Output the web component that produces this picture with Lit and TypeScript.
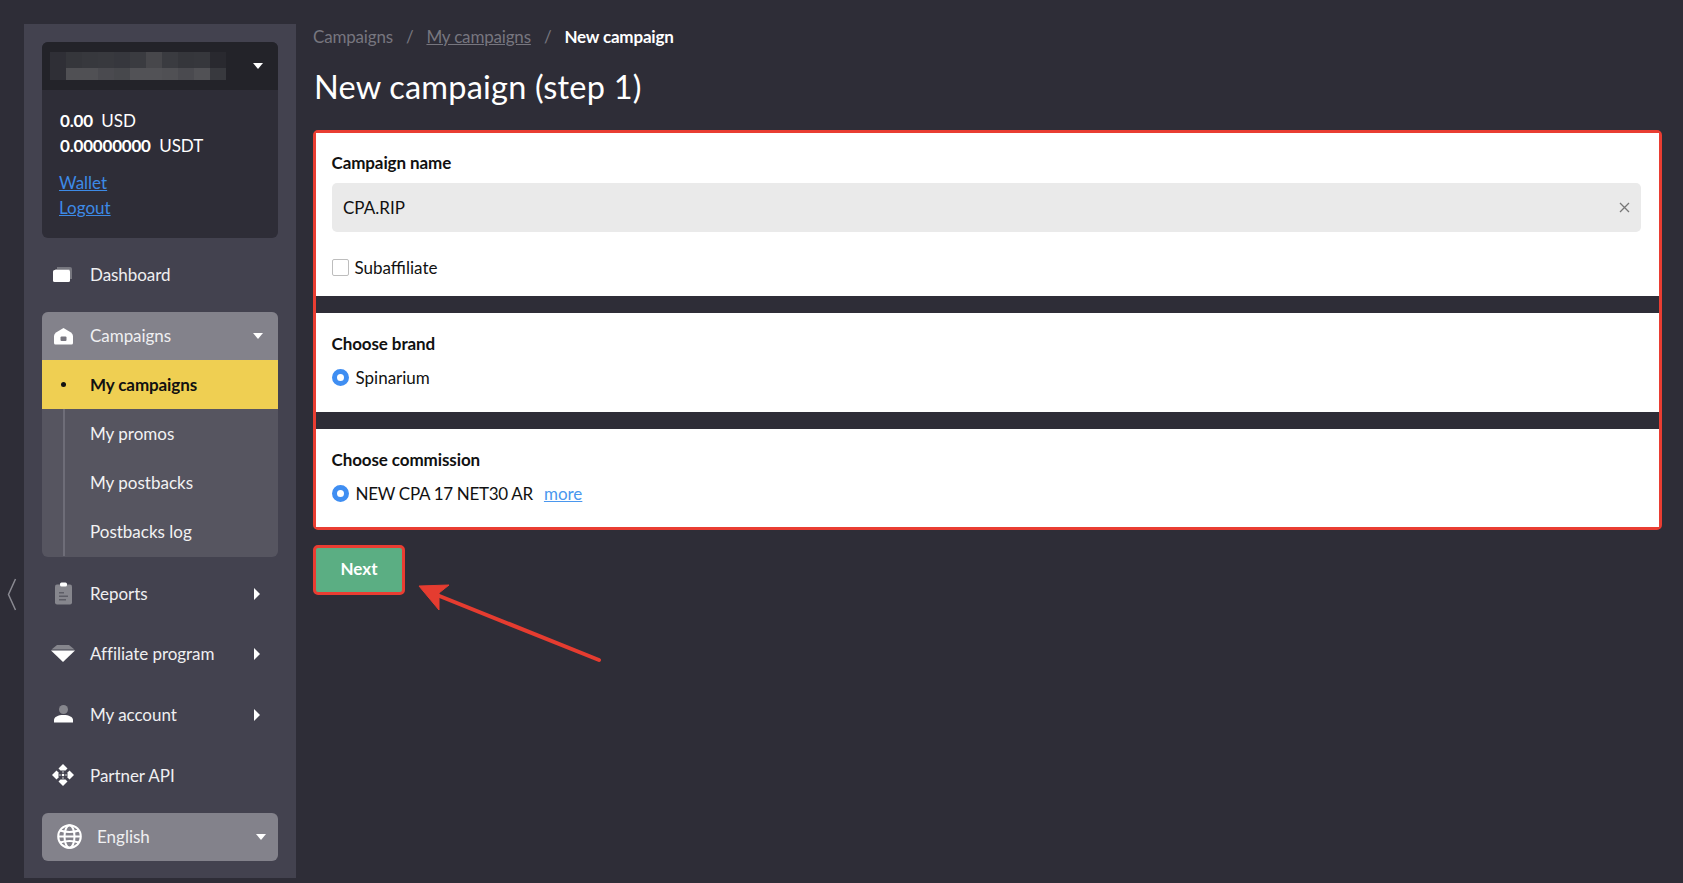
import { LitElement, html, css, svg } from "lit";
import { customElement } from "lit/decorators.js";

const row1 = ["#2f2f36","#35363b","#37383d","#38393e","#36373d","#3a3b40","#47474b","#3a3b40","#35363b","#36373c","#29292f"];
const row2 = ["#2f2f36","#505054","#505054","#4a4a4f","#47484c","#525256","#525256","#505054","#4a4a4f","#515155","#38393e"];

const icons = {
  dash: svg`<path d="M4 1h13a2 2 0 0 1 2 2v10h-2V3H4z" fill="#77777f"/><rect x="2" y="3" width="15" height="12" rx="1" fill="#9b9ba1"/><rect x="0" y="4" width="17" height="12" rx="1.5" fill="#fff"/>`,
  home: svg`<path d="M9.500 0 L17 4.500 Q19 6 19 8 V15 Q19 16.500 17.500 16.500 H1.500 Q0 16.500 0 15 V8 Q0 6 2 4.500 Z" fill="#fff"/><rect x="6.500" y="8.500" width="6" height="4.500" rx="1" fill="#77767f"/>`,
  report: svg`<rect x="1" y="2.500" width="17" height="20" rx="2" fill="#86868d"/><rect x="6" y="0.500" width="7" height="4" rx="1.500" fill="#fff"/><rect x="5" y="10" width="5" height="1.500" fill="#5d5d66"/><rect x="5" y="13.500" width="9" height="1.500" fill="#5d5d66"/><rect x="5" y="17" width="7" height="1.500" fill="#5d5d66"/>`,
  gem: svg`<path d="M6 0H18L23.500 4.500H.5Z" fill="#86868d"/><path d="M0 5.500H24L12 17Z" fill="#fff"/>`,
  user: svg`<circle cx="9.500" cy="4.500" r="4.500" fill="#86868d"/><path d="M0 17.500V15C0 12 4 10 9.500 10S19 12 19 15v2.500z" fill="#fff"/>`,
  api: svg`<g fill="#fff"><path d="M11 0l4.500 4.500-2 2h-5l-2-2z"/><path d="M11 22l4.500-4.500-2-2h-5l-2 2z"/><path d="M0 11l4.500-4.500 2 2v5l-2 2z"/><path d="M22 11l-4.500-4.500-2 2v5l2 2z"/><circle cx="11" cy="11" r="1.300"/><circle cx="11" cy="8" r=".7"/><circle cx="11" cy="14" r=".7"/><circle cx="8" cy="11" r=".7"/><circle cx="14" cy="11" r=".7"/></g>`,
};

const ico = (name: keyof typeof icons, w: number, h: number) =>
  html`<svg class="ico" width=${w} height=${h} viewBox="0 0 ${w} ${h}">${icons[name]}</svg>`;

@customElement("app-root")
export class AppRoot extends LitElement {
  static styles = css`
    :host { display: block; width: 1683px; height: 883px; background: #2e2d37; position: relative; overflow: hidden;
      font-family: "Lato", "Noto Sans", sans-serif; font-size: 17px; color: #fff; }
    .layout { display: flex; align-items: flex-start; height: 883px; padding: 24px 21px 5px 0; box-sizing: border-box; }
    .toggle { width: 24px; flex: none; align-self: flex-start; display: flex; padding: 554px 0 0 7px; box-sizing: border-box; }
    .side { width: 272px; flex: none; height: 854px; background: #43424f; padding: 18px 18px 0 18px; box-sizing: border-box; }
    .card { background: #2e2d37; border-radius: 6px; height: 196px; overflow: hidden; }
    .card-head { height: 48px; background: #232329; display: flex; align-items: center; justify-content: space-between; padding: 0 15px 0 8px; }
    .pix { display: grid; grid-template-columns: repeat(11, 16px); grid-template-rows: 16px 12px; }
    .tri-d { width: 0; height: 0; border-left: 5.500px solid transparent; border-right: 5.500px solid transparent; border-top: 6px solid #fff; }
    .tri-r { width: 0; height: 0; border-top: 6px solid transparent; border-bottom: 6px solid transparent; border-left: 6px solid #fff; }
    .bal { padding: 18px 0 0 18px; line-height: 25px; font-size: 17px; }
    .bal b { font-weight: 700; margin-right: 4px; letter-spacing: -.2px; }
    .links { padding: 12px 0 0 17px; line-height: 25px; display: flex; flex-direction: column; align-items: flex-start; }
    a { color: #3d8ae6; text-decoration: underline; }
    .item { display: flex; align-items: center; height: 48px; padding-left: 9px; position: relative; color: #efeff1; }
    .item .slot { width: 24px; display: flex; justify-content: center; flex: none; }
    .item .label { margin-left: 15px; flex: 1; letter-spacing: -.05px; }
    .item .tri-r { margin-right: 18px; margin-top: 1px; }
    .dashboard { margin: 12px 0 14px; }
    .group { background: #565560; border-radius: 6px; overflow: hidden; height: 245px; }
    .group-head { background: #83828b; padding-right: 15px; }
    .group-head .label { padding-bottom: 2px; }
    .subwrap { display: flex; flex-direction: column; }
    .subitem { height: 49px; display: flex; align-items: center; padding: 0 0 0 48px; box-sizing: border-box; position: relative; color: #f2f2f3; }
    .subitem::before { content: ""; position: absolute; left: 21px; top: 0; bottom: 0; width: 2px; background: #6e6d78; }
    .subitem.on { background: #efcf52; color: #111; font-weight: 700; letter-spacing: -.1px; }
    .subitem.on::before { left: 19px; top: 22px; bottom: auto; width: 5px; height: 5px; border-radius: 50%; background: #111; }
    .rows { padding-top: 12px; display: flex; flex-direction: column; gap: 12.500px; }
    .rows .item:last-child { padding-top: 1px; box-sizing: border-box; }
    .lang { margin-top: 14px; height: 48px; background: #83828b; border-radius: 6px; display: flex; align-items: center; padding: 0 12px 0 15px; }
    .lang span { flex: 1; margin-left: 15px; color: #efeff1; }
    main { flex: 1; padding-left: 17px; min-width: 0; }
    .crumbs { display: flex; align-items: center; height: 24px; color: #77767f; gap: 13px; letter-spacing: -.18px; }
    .crumbs a { color: #77767f; }
    .crumbs b { color: #fff; font-weight: 700; }
    h1 { margin: 13px 0 0 1px; font-size: 32.500px; font-weight: 400; line-height: 52px; letter-spacing: .2px; }
    .form { margin-top: 17px; border: 3px solid #e93d32; border-radius: 5px; display: flex; flex-direction: column; gap: 17px; height: 400px; box-sizing: border-box; }
    .sect { background: #fff; color: #111; padding: 0 18px 0 15.500px; box-sizing: border-box; }
    .s1 { height: 163px; padding-top: 19px; }
    .s2 { height: 99px; padding-top: 20px; }
    .s3 { height: 98px; padding-top: 20px; }
    .t { font-weight: 700; line-height: 22px; letter-spacing: -.1px; }
    .input { height: 49px; margin-top: 9px; background: #eaeaea; border-radius: 5px; display: flex; align-items: center; justify-content: space-between; padding: 0 11px 0 11.500px; }
    .opt { display: flex; align-items: center; height: 24px; margin-top: 10px; }
    .s1 .opt { margin-top: 23px; }
    .box { width: 17px; height: 17px; box-sizing: border-box; border: 1px solid #bdbdbd; border-radius: 2px; margin-right: 6px; }
    .radio { width: 17px; height: 17px; border-radius: 50%; border: 5px solid #3f8ef2; box-sizing: border-box; margin-right: 7px; background: #fff; }
    .tight { letter-spacing: -.3px; }
    .opt a { color: #4a97ee; margin-left: 11px; }
    .next { display: flex; align-items: center; justify-content: center; margin-top: 15px; width: 92px; height: 50px; padding-bottom: 3px; background: #5bae83; border: 3px solid #e93d32; border-radius: 5px; box-sizing: border-box; font-weight: 700; }
    .arrow { position: absolute; left: 410px; top: 575px; }
    .ico { display: block; }
  `;

  private row(name: keyof typeof icons, w: number, h: number, label: string, more = true) {
    return html`<div class="item"><div class="slot">${ico(name, w, h)}</div><div class="label">${label}</div>${more ? html`<div class="tri-r"></div>` : ""}</div>`;
  }

  render() {
    return html`<div class="layout">
      <div class="toggle"><svg width="10" height="33" viewBox="0 0 10 33"><path d="M8.500 1 L1.500 16.500 L8.500 32" fill="none" stroke="#8a8a92" stroke-width="1.500"/></svg></div>
      <aside class="side">
        <div class="card">
          <div class="card-head">
            <div class="pix">${[...row1, ...row2].map((c) => html`<i style="background:${c}"></i>`)}</div>
            <div class="tri-d"></div>
          </div>
          <div class="bal"><div><b>0.00</b> USD</div><div><b>0.00000000</b> USDT</div></div>
          <div class="links"><a>Wallet</a><a>Logout</a></div>
        </div>
        <div class="dashboard">${this.row("dash", 20, 17, "Dashboard", false)}</div>
        <div class="group">
          <div class="item group-head"><div class="slot">${ico("home", 19, 17)}</div><div class="label">Campaigns</div><div class="tri-d"></div></div>
          <div class="subwrap">
            <div class="subitem on">My campaigns</div>
            <div class="subitem">My promos</div>
            <div class="subitem">My postbacks</div>
            <div class="subitem">Postbacks log</div>
          </div>
        </div>
        <div class="rows">
          ${this.row("report", 19, 23, "Reports")}
          ${this.row("gem", 24, 17, "Affiliate program")}
          ${this.row("user", 19, 18, "My account")}
          ${this.row("api", 22, 22, "Partner API", false)}
        </div>
        <div class="lang">
          <svg class="ico" width="25" height="25" viewBox="0 0 25 25" fill="none" stroke="#fff" stroke-width="2"><circle cx="12.500" cy="12.500" r="11.300"/><ellipse cx="12.500" cy="12.500" rx="5" ry="11.300"/><path d="M1.200 12.500h22.600M3 6.500Q12.500 9.500 22 6.500M3 18.500Q12.500 15.500 22 18.500"/></svg>
          <span>English</span><div class="tri-d"></div>
        </div>
      </aside>
      <main>
        <nav class="crumbs"><span>Campaigns</span><span>/</span><a>My campaigns</a><span>/</span><b>New campaign</b></nav>
        <h1>New campaign (step 1)</h1>
        <div class="form">
          <section class="sect s1">
            <div class="t">Campaign name</div>
            <div class="input"><span>CPA.RIP</span><svg width="11" height="11" viewBox="0 0 11 11"><path d="M1 1l9 9M10 1l-9 9" stroke="#777" stroke-width="1.300"/></svg></div>
            <div class="opt"><div class="box"></div>Subaffiliate</div>
          </section>
          <section class="sect s2"><div class="t">Choose brand</div><div class="opt"><div class="radio"></div>Spinarium</div></section>
          <section class="sect s3"><div class="t">Choose commission</div><div class="opt"><div class="radio"></div><span class="tight">NEW CPA 17 NET30 AR</span><a>more</a></div></section>
        </div>
        <div class="next">Next</div>
      </main>
    </div>
    <svg class="arrow" width="200" height="90" viewBox="0 0 200 90"><path d="M189 85 L22 18" stroke="#e53c30" stroke-width="4" stroke-linecap="round"/><path d="M9 11 L39 10 L29 18 L29 35 Z" fill="#e53c30" stroke="#e53c30" stroke-width="1"/></svg>`;
  }
}
